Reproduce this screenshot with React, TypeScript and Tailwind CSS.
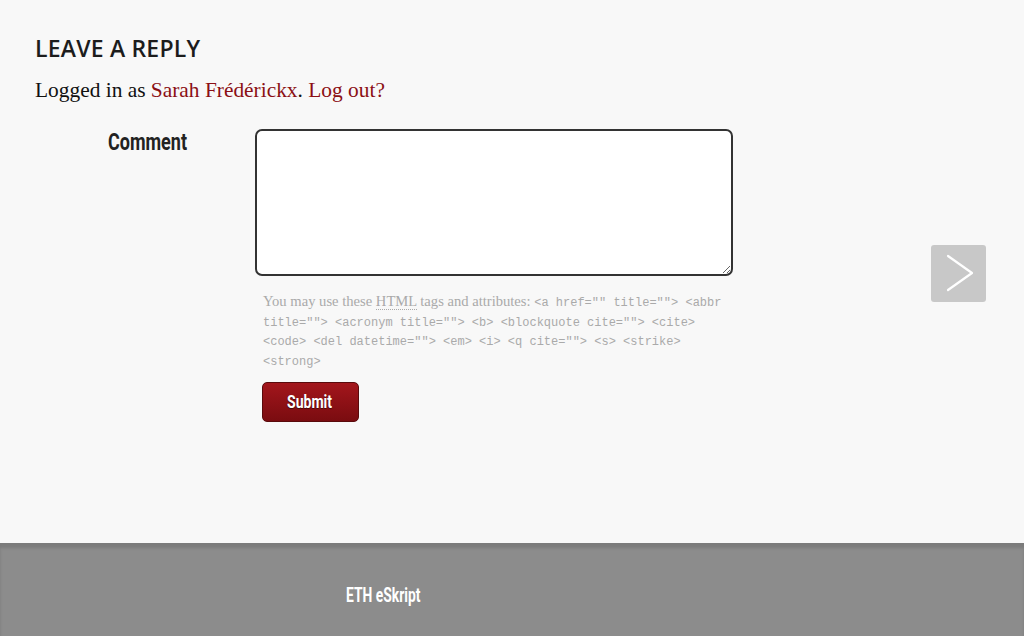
const serif = "font-['Liberation_Serif','Times_New_Roman',serif]"
const mono = "font-['Liberation_Mono','Courier_New',monospace]"
// no condensed face is installed, so squeeze Roboto bold sideways
const narrow = "font-['Roboto','Liberation_Sans',sans-serif] font-bold inline-block origin-left"

const allowed =
  '<a href="" title=""> <abbr title=""> <acronym title=""> <b> <blockquote cite=""> <cite> <code> <del datetime=""> <em> <i> <q cite=""> <s> <strike> <strong>'

export default function App() {
  return (
    <div className="relative flex h-[636px] w-[1024px] flex-col overflow-hidden bg-[#f8f8f8]">
      <main className="flex-1 px-[35px] pt-[34px]">
        <h3 className="font-['Open_Sans','Liberation_Sans',sans-serif] text-[23px] font-semibold leading-7 tracking-[0.2px] text-[#1c1c1c]">
          LEAVE A REPLY
        </h3>
        <p className={`${serif} mt-[16px] text-[21.4px] leading-6 text-[#111]`}>
          Logged in as <a className="text-[#8b0f14]">Sarah Frédérickx</a>.{' '}
          <a className="text-[#8b0f14]">Log out?</a>
        </p>

        <form className="mt-[27px] flex">
          <div className="w-[220px] shrink-0 pl-[73px] pt-px">
            <label className={`${narrow} scale-x-[0.75] text-[24px] leading-[24px] text-[#222]`}>
              Comment
            </label>
          </div>
          <div className="flex flex-col">
            <textarea className="h-[147px] w-[478px] resize rounded-[7px] border-2 border-[#333] bg-white" />
            <p className={`${serif} mt-[16px] w-[480px] pl-[8px] text-[14.6px] leading-[19.5px] text-[#aaa]`}>
              You may use these{' '}
              <abbr className="border-b border-dotted border-[#aaa] no-underline">HTML</abbr> tags and
              attributes: <code className={`${mono} text-[12px] leading-none`}>{allowed}</code>
            </p>
            <button
              type="button"
              className="ml-[7px] mt-[12px] flex h-[40px] w-[97px] items-center justify-center rounded-[5px] border border-[#5a0a0c] bg-gradient-to-b from-[#a3161c] to-[#7a0c10] text-white"
            >
              <span
                className={`${narrow} ml-[13px] scale-x-[0.74] text-[19px] [text-shadow:0_1px_1px_rgba(0,0,0,0.5)]`}
              >
                Submit
              </span>
            </button>
          </div>
        </form>
      </main>

      <button
        type="button"
        className="absolute left-[931px] top-[245px] h-[57px] w-[55px] rounded-[3px] bg-[#c8c8c8]"
      >
        <svg viewBox="0 0 55 57" className="h-[57px] w-[55px]" fill="none">
          <polyline
            points="17,11 41,28 17,45"
            stroke="white"
            strokeWidth="2.2"
            strokeLinecap="round"
            strokeLinejoin="round"
          />
        </svg>
      </button>

      <footer className="h-[93px] border-t-2 border-[#7b7b7b] bg-[#8c8c8c] shadow-[inset_0_3px_3px_rgba(0,0,0,0.12)]">
        <div className="pl-[346px] pt-[38px]">
          <p className={`${narrow} scale-x-[0.66] text-[21px] leading-6 text-white`}>ETH eSkript</p>
        </div>
      </footer>
    </div>
  )
}
